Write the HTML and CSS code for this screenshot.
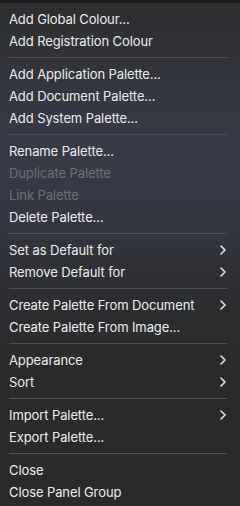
FILE: index.html
```html
<!DOCTYPE html>
<html lang="en">
<head>
<meta charset="utf-8">
<title>Palette Menu</title>
<link rel="stylesheet" href="styles.css">
</head>
<body>
<div class="topstrip"></div>
<div class="menu">
  <div class="item">Add Global Colour...</div>
  <div class="item">Add Registration Colour</div>
  <div class="sep"></div>
  <div class="item">Add Application Palette...</div>
  <div class="item">Add Document Palette...</div>
  <div class="item">Add System Palette...</div>
  <div class="sep"></div>
  <div class="item">Rename Palette...</div>
  <div class="item disabled">Duplicate Palette</div>
  <div class="item disabled">Link Palette</div>
  <div class="item">Delete Palette...</div>
  <div class="sep"></div>
  <div class="item sub">Set as Default for<svg class="chev" viewBox="0 0 6 10"><path d="M1 1 L5 5 L1 9"/></svg></div>
  <div class="item sub">Remove Default for<svg class="chev" viewBox="0 0 6 10"><path d="M1 1 L5 5 L1 9"/></svg></div>
  <div class="sep"></div>
  <div class="item sub">Create Palette From Document<svg class="chev" viewBox="0 0 6 10"><path d="M1 1 L5 5 L1 9"/></svg></div>
  <div class="item">Create Palette From Image...</div>
  <div class="sep"></div>
  <div class="item sub">Appearance<svg class="chev" viewBox="0 0 6 10"><path d="M1 1 L5 5 L1 9"/></svg></div>
  <div class="item sub">Sort<svg class="chev" viewBox="0 0 6 10"><path d="M1 1 L5 5 L1 9"/></svg></div>
  <div class="sep"></div>
  <div class="item sub">Import Palette...<svg class="chev" viewBox="0 0 6 10"><path d="M1 1 L5 5 L1 9"/></svg></div>
  <div class="item">Export Palette...</div>
  <div class="sep"></div>
  <div class="item">Close</div>
  <div class="item">Close Panel Group</div>
</div>
</body>
</html>
```
FILE: styles.css
```css
html, body {
  margin: 0;
  padding: 0;
}
body {
  width: 240px;
  height: 506px;
  overflow: hidden;
  font-family: Inter, "Noto Sans", sans-serif;
  font-size: 13px;
  letter-spacing: -0.1px;
  color: #ececee;
  background: linear-gradient(180deg, #2d2d2f 0%, #33353d 15%, #373b48 30%, #343743 42%, #2d2e31 58%, #2a2a2a 75%, #2a2a2a 100%);
}
.topstrip {
  height: 3px;
  background: #1d1d1f;
}
.menu {
  padding-top: 5px;
  display: flex;
  flex-direction: column;
}
.item {
  height: 22px;
  display: flex;
  align-items: center;
  justify-content: space-between;
  padding: 0 14px 0 9px;
  white-space: nowrap;
}
.item.disabled {
  color: #6e6f75;
}
.sep {
  height: 11px;
  display: flex;
  align-items: center;
  padding: 0 13px 0 9px;
}
.sep::before {
  content: "";
  display: block;
  flex: 1;
  height: 1px;
  background: #505156;
}
.chev {
  width: 6px;
  height: 10px;
  fill: none;
  stroke: #ececee;
  stroke-width: 1.5;
  stroke-linecap: round;
  stroke-linejoin: round;
}
```
